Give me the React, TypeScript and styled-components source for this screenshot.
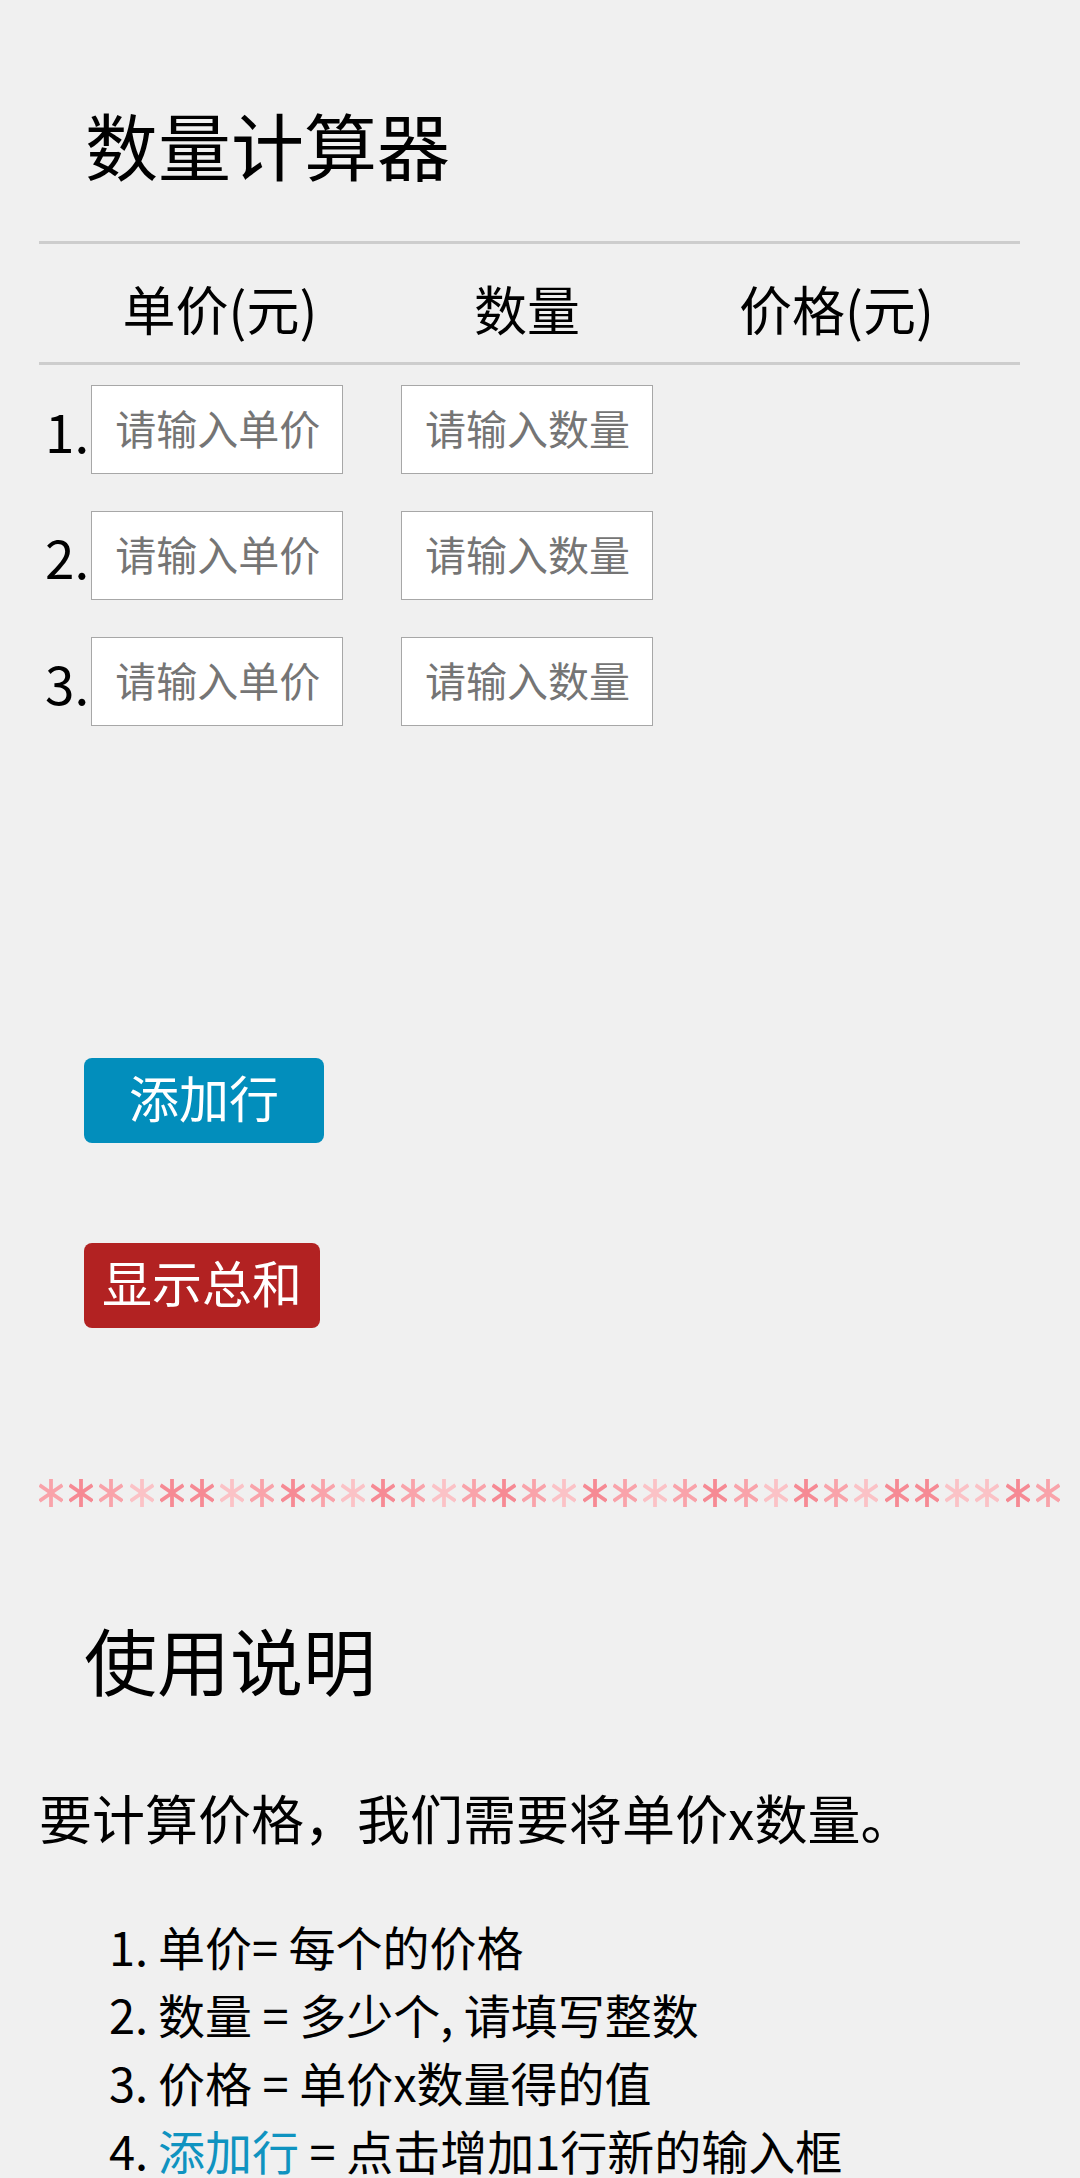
import React from "react";
import styled, { createGlobalStyle } from "styled-components";

const GlobalStyle = createGlobalStyle`
  html, body {
    margin: 0;
    padding: 0;
    background: #f0f0f0;
  }
  body {
    font-family: "Noto Sans CJK SC", "Noto Sans", sans-serif;
    color: #000;
  }
  * { box-sizing: border-box; }
`;

const Page = styled.div`
  padding: 100px 20px 0 39px;
  min-height: 2178px;
`;

const Title = styled.h1`
  margin: 0 0 0 46px;
  font-size: 73px;
  line-height: 86px;
  font-weight: 400;
`;

const Table = styled.div`
  width: 981px;
  margin-top: 55px;
  border-top: 3px solid #cdcdcd;
`;

const Row = styled.div<{ $head?: boolean }>`
  display: grid;
  grid-template-columns: 362px 252px 367px;
  align-items: center;
  ${(p) =>
    p.$head
      ? `
    padding: 33px 0 23px;
    border-bottom: 3px solid #cdcdcd;
  `
      : `
    height: 89px;
    margin-top: 37px;
    &:nth-of-type(2) { margin-top: 20px; }
  `}
`;

const HeadCell = styled.div`
  font-size: 53px;
  line-height: 62px;
  text-align: center;
`;

const Cell = styled.div`
  display: flex;
  align-items: center;
  height: 100%;
`;

const FirstCell = styled(Cell)`
  padding-left: 6px;
`;

const Num = styled.span`
  font-size: 53px;
  line-height: 62px;
  margin-right: 2px;
`;

const Field = styled.input`
  width: 252px;
  height: 89px;
  border: 1px solid #a7a7a7;
  background: #fff;
  padding: 0 0 6px 23px;
  font-family: "Noto Sans CJK SC", "Noto Sans", sans-serif;
  font-size: 41px;
  color: #000;
  outline: none;
  border-radius: 0;
  &::placeholder {
    color: #757575;
  }
`;

const Actions = styled.div`
  margin-top: 332px;
  padding-left: 45px;
  display: flex;
  flex-direction: column;
  align-items: flex-start;
  gap: 100px;
`;

const Button = styled.button<{ $tone: "blue" | "red" }>`
  height: 85px;
  min-width: 240px;
  padding: 8px 18px 17px;
  border: none;
  border-radius: 8px;
  background: ${(p) => (p.$tone === "blue" ? "#028ebc" : "#b22222")};
  color: #fff;
  font-family: "Noto Sans CJK SC", "Noto Sans", sans-serif;
  font-size: 50px;
  line-height: 60px;
  cursor: pointer;
  &:last-child {
    min-width: 0;
  }
`;

const StarRow = styled.div`
  margin-top: 151px;
  width: 1021px;
  height: 28px;
  display: flex;
  justify-content: space-between;
  filter: blur(0.6px);
`;

const StarIcon = styled.svg`
  display: block;
  width: 24px;
  height: 28px;
`;

const SubTitle = styled.h2`
  margin: 108px 0 0 45px;
  font-size: 73px;
  line-height: 86px;
  font-weight: 400;
`;

const Para = styled.p`
  margin: 85px 0 0;
  font-size: 53px;
  line-height: 62px;
`;

const Steps = styled.ol`
  margin: 64px 0 0;
  padding: 0 0 0 70px;
  list-style: none;
  font-size: 47px;
  line-height: 68px;
`;

const Step = styled.li`
  display: flex;
`;

const StepNum = styled.span`
  width: 49px;
  flex: none;
`;

const Link = styled.span`
  color: #0f93c0;
`;

const toneColor: Record<string, string> = {
  D: "#f68a94",
  M: "#f9a3aa",
  L: "#fbc2c6",
};

const pattern = "MDMLDDLMDMLDMLMDMLDMLMDMLDMLDDLLDM";

const Star = ({ tone }: { tone: string }) => (
  <StarIcon viewBox="0 0 24 28">
    <g stroke={toneColor[tone]} strokeWidth={3.8}>
      <line x1={12} y1={0} x2={12} y2={28} />
      <line x1={0.5} y1={6} x2={23.5} y2={22} />
      <line x1={0.5} y1={22} x2={23.5} y2={6} />
    </g>
  </StarIcon>
);

export default function App() {
  const rows = [1, 2, 3];
  return (
    <>
      <GlobalStyle />
      <Page>
        <Title>数量计算器</Title>
        <Table>
          <Row $head>
            <HeadCell>单价(元)</HeadCell>
            <HeadCell>数量</HeadCell>
            <HeadCell>价格(元)</HeadCell>
          </Row>
          {rows.map((n) => (
            <Row key={n}>
              <FirstCell>
                <Num>{n}.</Num>
                <Field placeholder="请输入单价" />
              </FirstCell>
              <Cell>
                <Field placeholder="请输入数量" />
              </Cell>
              <Cell />
            </Row>
          ))}
        </Table>
        <Actions>
          <Button $tone="blue">添加行</Button>
          <Button $tone="red">显示总和</Button>
        </Actions>
        <StarRow>
          {pattern.split("").map((t, i) => (
            <Star key={i} tone={t} />
          ))}
        </StarRow>
        <SubTitle>使用说明</SubTitle>
        <Para>要计算价格，我们需要将单价x数量。</Para>
        <Steps>
          <Step>
            <StepNum>1.</StepNum>
            <span>单价= 每个的价格</span>
          </Step>
          <Step>
            <StepNum>2.</StepNum>
            <span>数量 = 多少个, 请填写整数</span>
          </Step>
          <Step>
            <StepNum>3.</StepNum>
            <span>价格 = 单价x数量得的值</span>
          </Step>
          <Step>
            <StepNum>4.</StepNum>
            <span>
              <Link>添加行</Link> = 点击增加1行新的输入框
            </span>
          </Step>
        </Steps>
      </Page>
    </>
  );
}
